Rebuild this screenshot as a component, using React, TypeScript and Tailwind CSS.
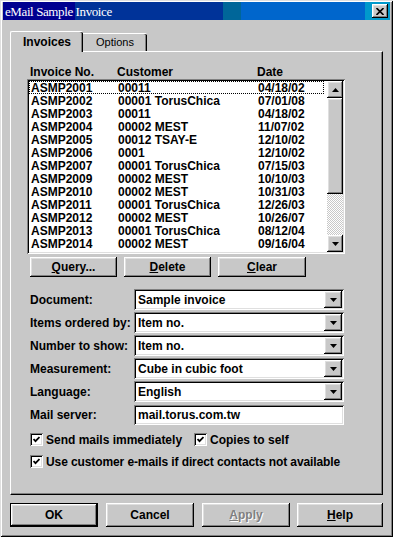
import React from "react";

const rows: [string, string, string][] = [
  ["ASMP2001", "00011", "04/18/02"],
  ["ASMP2002", "00001 TorusChica", "07/01/08"],
  ["ASMP2003", "00011", "04/18/02"],
  ["ASMP2004", "00002 MEST", "11/07/02"],
  ["ASMP2005", "00012 TSAY-E", "12/10/02"],
  ["ASMP2006", "0001", "12/10/02"],
  ["ASMP2007", "00001 TorusChica", "07/15/03"],
  ["ASMP2009", "00002 MEST", "10/10/03"],
  ["ASMP2010", "00002 MEST", "10/31/03"],
  ["ASMP2011", "00001 TorusChica", "12/26/03"],
  ["ASMP2012", "00002 MEST", "10/26/07"],
  ["ASMP2013", "00001 TorusChica", "08/12/04"],
  ["ASMP2014", "00002 MEST", "09/16/04"],
  ["ASMP2015", "00002 MEST", "09/23/04"],
];

const RAISED =
  "shadow-[inset_-1px_-1px_0_#000,inset_1px_1px_0_#fff,inset_-2px_-2px_0_#808080,inset_2px_2px_0_#dfdfdf]";
const SUNKEN =
  "shadow-[inset_1px_1px_0_#808080,inset_-1px_-1px_0_#fff,inset_2px_2px_0_#000,inset_-2px_-2px_0_#dfdfdf]";

function Down() {
  return (
    <svg width="7" height="4" viewBox="0 0 7 4">
      <polygon points="0,0 7,0 3.5,4" fill="#000" />
    </svg>
  );
}
function Up() {
  return (
    <svg width="7" height="4" viewBox="0 0 7 4">
      <polygon points="0,4 7,4 3.5,0" fill="#000" />
    </svg>
  );
}

function Check() {
  return (
    <div className={`w-[13px] h-[13px] shrink-0 bg-white ${SUNKEN} flex items-center justify-center`}>
      <svg width="7" height="7" viewBox="0 0 7 7">
        <path d="M0.5 3 L2.5 5.2 L6.5 1" stroke="#000" strokeWidth="1.8" fill="none" />
      </svg>
    </div>
  );
}

function Select({ value }: { value: string }) {
  return (
    <div className={`w-[210px] h-[21px] bg-white ${SUNKEN} flex items-center justify-between pl-[4px] pr-[2px]`}>
      <span className="font-bold leading-none">{value}</span>
      <div className={`w-[18px] h-[17px] bg-[#c8c8c8] ${RAISED} flex items-center justify-center`}>
        <Down />
      </div>
    </div>
  );
}

function Btn({ children, w }: { children: React.ReactNode; w: string }) {
  return (
    <div className={`${w} h-[20px] bg-[#c8c8c8] ${RAISED} flex items-center justify-center font-bold leading-none`}>
      {children}
    </div>
  );
}

export default function App() {
  return (
    <div className="w-[393px] h-[537px] bg-[#c8c8c8] text-[12px] text-black font-['Liberation_Sans',Arial,sans-serif] flex flex-col pt-[2px] px-[3px] pb-[3px] shadow-[inset_1px_1px_0_#dfdfdf,inset_-1px_-1px_0_#000,inset_2px_2px_0_#fff,inset_-2px_-2px_0_#808080]">
      {/* Title bar */}
      <div className="h-[18px] flex items-center justify-between bg-[linear-gradient(90deg,#000090_0px,#000090_72px,#003399_72px,#003399_220px,#006699_220px,#006699_238px,#0066cc_238px,#0066cc_362px,#0099cc_362px)]">
        <span className="pl-[2px] text-white text-[13px] tracking-[-0.4px] font-['Liberation_Serif','Times_New_Roman',serif] leading-none">
          eMail Sample Invoice
        </span>
        <div className={`mr-[2px] w-[16px] h-[14px] bg-[#c8c8c8] ${RAISED} flex items-center justify-center`}>
          <svg width="8" height="7" viewBox="0 0 8 7">
            <path d="M0.5 0 L7.5 7 M7.5 0 L0.5 7" stroke="#000" strokeWidth="1.6" />
          </svg>
        </div>
      </div>

      {/* Tabs */}
      <div className="h-[31px] flex items-end pl-[7px]">
        <div className="relative z-10 -mb-[1px] w-[73px] h-[21px] bg-[#c8c8c8] border-l border-t border-white rounded-tl-[2px] rounded-tr-[2px] shadow-[inset_-1px_0_0_#000,inset_-2px_0_0_#808080] flex items-center justify-center pb-[1px] leading-none">
          <span className="font-bold">Invoices</span>
        </div>
        <div className="w-[64px] h-[18px] border-t border-white rounded-tr-[2px] shadow-[inset_-1px_0_0_#000,inset_-2px_0_0_#808080] flex items-center justify-center pb-[1px] leading-none">
          <span className="text-[11px]">Options</span>
        </div>
      </div>

      {/* Panel */}
      <div className="ml-[7px] w-[373px] h-[444px] border-l border-t border-white border-r border-b border-r-black border-b-black shadow-[inset_-1px_-1px_0_#808080] flex flex-col">
        {/* Headers */}
        <div className="mt-[13px] h-[14px] flex items-center font-bold leading-none">
          <span className="ml-[19px] w-[87px]">Invoice No.</span>
          <span className="w-[140px]">Customer</span>
          <span>Date</span>
        </div>

        {/* Listbox */}
        <div className={`ml-[16px] w-[318px] h-[175px] bg-white ${SUNKEN} p-[2px] flex`}>
          <div className="w-[298px] overflow-hidden">
            {rows.map((r, i) => (
              <div
                key={r[0]}
                className={`w-[295px] h-[13px] flex items-center font-bold leading-none border ${
                  i === 0 ? "border-dotted border-black" : "border-transparent"
                }`}
              >
                <span className="w-[88px] pl-[1px]">{r[0]}</span>
                <span className="w-[140px]">{r[1]}</span>
                <span>{r[2]}</span>
              </div>
            ))}
          </div>
          <div className="w-[16px] flex flex-col">
            <div className={`h-[17px] bg-[#c8c8c8] ${RAISED} flex items-center justify-center`}>
              <Up />
            </div>
            <div className={`h-[96px] bg-[#c8c8c8] ${RAISED}`} />
            <div className="flex-1 bg-[repeating-conic-gradient(#c8c8c8_0_25%,#ffffff_0_50%)] bg-[length:2px_2px]" />
            <div className={`h-[17px] bg-[#c8c8c8] ${RAISED} flex items-center justify-center`}>
              <Down />
            </div>
          </div>
        </div>

        {/* Buttons */}
        <div className="mt-[3px] ml-[19px] flex gap-[7px]">
          <Btn w="w-[87px]">
            <span>
              <span className="underline">Q</span>uery...
            </span>
          </Btn>
          <Btn w="w-[87px]">
            <span>
              <span className="underline">D</span>elete
            </span>
          </Btn>
          <Btn w="w-[88px]">
            <span>
              <span className="underline">C</span>lear
            </span>
          </Btn>
        </div>

        {/* Form */}
        <div className="mt-[12px] ml-[19px] flex flex-col gap-[2px]">
          {[
            ["Document:", "Sample invoice"],
            ["Items ordered by:", "Item no."],
            ["Number to show:", "Item no."],
            ["Measurement:", "Cube in cubic foot"],
            ["Language:", "English"],
          ].map(([l, v]) => (
            <div key={l} className="flex items-center h-[21px]">
              <span className="w-[104px] font-bold leading-none">{l}</span>
              <Select value={v} />
            </div>
          ))}
          <div className="flex items-center h-[20px] mt-[1px]">
            <span className="w-[104px] font-bold leading-none">Mail server:</span>
            <div className={`w-[210px] h-[20px] bg-white ${SUNKEN} flex items-center pl-[4px]`}>
              <span className="font-bold leading-none">mail.torus.com.tw</span>
            </div>
          </div>
        </div>

        {/* Checkboxes */}
        <div className="mt-[8px] ml-[19px] flex flex-col gap-[9px] leading-none">
          <div className="flex items-center h-[13px]">
            <Check />
            <span className="ml-[3px] font-bold w-[148px]">Send mails immediately</span>
            <Check />
            <span className="ml-[3px] font-bold">Copies to self</span>
          </div>
          <div className="flex items-center h-[13px]">
            <Check />
            <span className="ml-[3px] font-bold tracking-[-0.1px]">Use customer e-mails if direct contacts not available</span>
          </div>
        </div>
      </div>

      {/* Bottom buttons */}
      <div className="mt-[8px] ml-[7px] flex leading-none">
        <div className={`w-[88px] h-[24px] border border-black bg-[#c8c8c8] ${RAISED} flex items-center justify-center font-bold`}>
          OK
        </div>
        <div className={`ml-[8px] w-[88px] h-[24px] bg-[#c8c8c8] ${RAISED} flex items-center justify-center font-bold`}>
          Cancel
        </div>
        <div className={`ml-[8px] w-[88px] h-[24px] bg-[#c8c8c8] ${RAISED} flex items-center justify-center font-bold text-[#808080] [text-shadow:1px_1px_0_#fff]`}>
          <span>
            <span className="underline">A</span>pply
          </span>
        </div>
        <div className={`ml-[7px] w-[86px] h-[24px] bg-[#c8c8c8] ${RAISED} flex items-center justify-center font-bold`}>
          <span>
            <span className="underline">H</span>elp
          </span>
        </div>
      </div>
    </div>
  );
}
